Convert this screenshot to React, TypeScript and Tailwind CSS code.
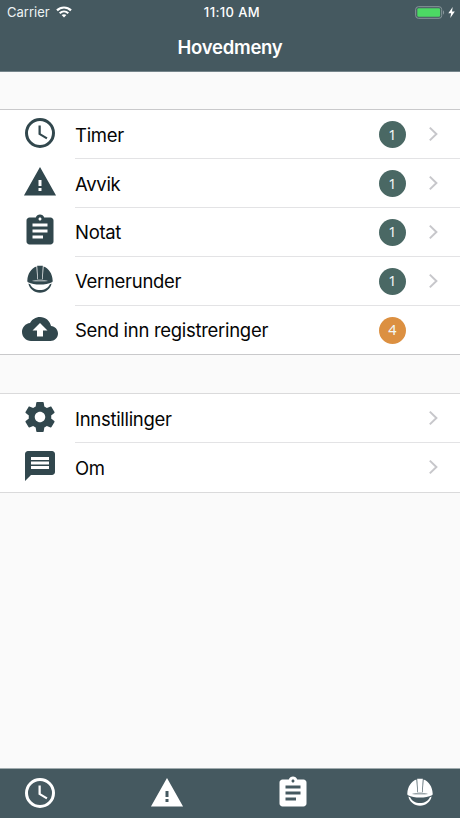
import React from 'react';

type IconProps = { className?: string };

const ClockIcon = ({ className = '' }: IconProps) => (
  <svg viewBox="0 0 24 24" className={`h-9 w-9 shrink-0 ${className}`} fill="currentColor">
    <path d="M12 2a10 10 0 1 0 0 20 10 10 0 0 0 0-20zm0 18a8 8 0 1 1 0-16 8 8 0 0 1 0 16z" />
    <path d="M12.500 7H11v6l5.250 3.150.75-1.230-4.500-2.670z" />
  </svg>
);

const WarningIcon = ({ className = '' }: IconProps) => (
  <svg viewBox="0 0 24 24" className={`h-9 w-9 shrink-0 ${className}`} fill="currentColor">
    <path d="M1.300 21h21.400L12 2 1.300 21zm11.700-3h-2v-2h2v2zm0-3.400h-2v-4h2v4z" />
  </svg>
);

const NoteIcon = ({ className = '' }: IconProps) => (
  <svg viewBox="0 0 24 24" className={`h-9 w-9 shrink-0 ${className}`} fill="currentColor">
    <path d="M19 3h-4.180C14.400 1.840 13.300 1 12 1c-1.300 0-2.400.84-2.820 2H5c-1.100 0-2 .9-2 2v14c0 1.100.9 2 2 2h14c1.100 0 2-.9 2-2V5c0-1.100-.9-2-2-2zm-7 0c.55 0 1 .45 1 1s-.45 1-1 1-1-.45-1-1 .45-1 1-1zm2 14H7v-2h7v2zm3-4H7v-2h10v2zm0-4H7V7h10v2z" />
  </svg>
);

const HelmetIcon = ({ className = '' }: IconProps) => (
  <svg viewBox="0 0 36 36" className={`h-9 w-9 shrink-0 ${className}`} fill="currentColor">
    <path d="M15.200 3.700h5.600l-.7 13.900h-4.200z" />
    <path
      fillRule="evenodd"
      d="M14.400 4.600l.9 12.600.6.300h4.200l.6-.3.900-12.600c5.200 1.900 8.800 7.200 9.100 14.100 0 .7-.2 1.300-.7 1.600-3.200 1.500-7.400 2.300-12 2.300s-8.800-.8-12-2.300c-.5-.3-.7-.9-.7-1.600.3-6.900 3.900-12.200 9.100-14.100zM10 19c4.800.7 11.200.7 16 0-4.500-1.300-11.500-1.300-16 0z"
    />
    <path d="M10 19c4.800.7 11.200.7 16 0-4.500-.7-11.500-.7-16 0z" />
    <path d="M6.400 21.600c1.100 5.300 5.800 9.200 11.600 9.200s10.500-3.900 11.600-9.200l-1.700.7c-1.700 3.700-5.400 5.800-9.900 5.800s-8.200-2.100-9.900-5.800z" />
  </svg>
);

const CloudIcon = ({ className = '' }: IconProps) => (
  <svg viewBox="0 0 24 24" className={`h-9 w-9 shrink-0 ${className}`} fill="currentColor">
    <path d="M19.350 10.040C18.670 6.590 15.640 4 12 4 9.110 4 6.600 5.640 5.350 8.040 2.340 8.360 0 10.910 0 14c0 3.310 2.690 6 6 6h13c2.760 0 5-2.240 5-5 0-2.640-2.050-4.780-4.650-4.960zM14 13v4h-4v-4H7l5-5 5 5h-3z" />
  </svg>
);

const GearIcon = ({ className = '' }: IconProps) => (
  <svg viewBox="0 0 24 24" className={`h-9 w-9 shrink-0 ${className}`} fill="currentColor">
    <path d="M19.430 12.980c.04-.32.07-.64.07-.98s-.03-.66-.07-.98l2.110-1.650c.19-.15.24-.42.12-.64l-2-3.460c-.12-.22-.39-.3-.61-.22l-2.490 1c-.52-.4-1.080-.73-1.690-.98l-.38-2.650C14.460 2.180 14.250 2 14 2h-4c-.25 0-.46.18-.49.42l-.38 2.650c-.61.25-1.170.59-1.690.98l-2.490-1c-.23-.09-.49 0-.61.22l-2 3.460c-.13.22-.07.49.12.64l2.110 1.650c-.04.32-.07.65-.07.98s.03.66.07.98l-2.110 1.650c-.19.15-.24.42-.12.64l2 3.460c.12.22.39.3.61.22l2.490-1c.52.4 1.080.73 1.690.98l.38 2.650c.03.24.24.42.49.42h4c.25 0 .46-.18.49-.42l.38-2.650c.61-.25 1.170-.59 1.690-.98l2.490 1c.23.09.49 0 .61-.22l2-3.460c.12-.22.07-.49-.12-.64l-2.110-1.650zM12 15.500c-1.930 0-3.500-1.570-3.500-3.500s1.570-3.500 3.500-3.500 3.500 1.570 3.500 3.500-1.570 3.500-3.500 3.500z" />
  </svg>
);

const MessageIcon = ({ className = '' }: IconProps) => (
  <svg viewBox="0 0 24 24" className={`h-9 w-9 shrink-0 ${className}`} fill="currentColor">
    <path d="M20 2H4c-1.100 0-1.990.9-1.990 2L2 22l4-4h14c1.100 0 2-.9 2-2V4c0-1.100-.9-2-2-2zm-2 12H6v-2h12v2zm0-3H6V9h12v2zm0-3H6V6h12v2z" />
  </svg>
);

const Chevron = () => (
  <svg viewBox="0 0 10 16" className="h-4 w-2.5" fill="none" stroke="#c7c7cb" strokeWidth="2">
    <path d="M1.800 1.600L8.400 8l-6.600 6.400" />
  </svg>
);

type RowProps = {
  icon: React.ReactNode;
  label: string;
  count?: number;
  alert?: boolean;
  arrow?: boolean;
  last?: boolean;
};

const Row = ({ icon, label, count, alert = false, arrow = true, last = false }: RowProps) => (
  <li className="flex h-[48.900px] items-stretch pl-[22px]">
    <span className="flex w-[53px] shrink-0 items-center pb-[2px] text-[#31474d]">{icon}</span>
    <div className={`flex flex-1 items-center pr-[21px] ${last ? 'pb-px' : 'border-b border-[#e3e3e5]'}`}>
      <span className="flex-1 pt-[1.500px] text-[18.500px] leading-6 tracking-[-0.3px] text-[#050505]">{label}</span>
      {count !== undefined && (
        <span
          className={`mr-[21px] mt-px flex h-[27px] w-[27px] items-center justify-center rounded-full pb-px font-['Noto_Sans',sans-serif] text-[14.500px] leading-none text-[#f2f8f7] ${alert ? 'bg-[#dc9041]' : 'bg-[#4a6864]'}`}
        >
          {count}
        </span>
      )}
      <span className="flex w-[12px] justify-center">{arrow && <Chevron />}</span>
    </div>
  </li>
);

export default function App() {
  return (
    <main className="flex h-[818px] w-[460px] flex-col overflow-hidden bg-[#fafafa] font-['Inter',sans-serif]">
      <header className="h-[71.500px] shrink-0 border-b border-[#75858b] bg-[#455960] text-white">
        <div className="grid h-6 grid-cols-3 items-center pl-[7px] pr-[5px] text-[13px] leading-6">
          <div className="flex items-center gap-[6px]">
            <span className="text-[#edf3f4]">Carrier</span>
            <svg viewBox="0 0 16 12" className="h-[12px] w-4" fill="none" stroke="white" strokeWidth="2.200">
              <path d="M1 4.400c4-3.900 10-3.900 14 0" />
              <path d="M3.700 7.200c2.500-2.300 6.100-2.300 8.600 0" />
              <path d="M8 11.500L5.600 9.100c1.300-1.200 3.500-1.200 4.800 0z" fill="white" stroke="none" />
            </svg>
          </div>
          <span className="pl-0.5 text-center font-medium tracking-[0.4px]">11:10 AM</span>
          <div className="flex items-center justify-end gap-[3px]">
            <svg viewBox="0 0 30 13" className="h-[13px] w-[30px]">
              <rect x=".7" y=".7" width="26" height="11.600" rx="2.700" fill="none" stroke="#88979b" />
              <rect x="2.300" y="2.300" width="22.800" height="8.400" rx="1.300" fill="#4cd964" />
              <path d="M28 4.300c1.500.8 1.500 3.600 0 4.400z" fill="#88979b" />
            </svg>
            <svg viewBox="0 0 7 11" className="h-[11px] w-[7px]" fill="white">
              <path d="M4.700 0L.3 6.200h2.800L2.300 11l4.500-6.500H4z" />
            </svg>
          </div>
        </div>
        <h1 className="pt-[10px] text-center text-[18.500px] font-semibold leading-[26px] tracking-[-0.25px]">Hovedmeny</h1>
      </header>

      <ul className="mt-[37.500px] shrink-0 border-y border-[#c9c9cb] bg-white">
        <Row icon={<ClockIcon />} label="Timer" count={1} />
        <Row icon={<WarningIcon />} label="Avvik" count={1} />
        <Row icon={<NoteIcon />} label="Notat" count={1} />
        <Row icon={<HelmetIcon />} label="Vernerunder" count={1} />
        <Row icon={<CloudIcon />} label="Send inn registreringer" count={4} alert arrow={false} last />
      </ul>

      <ul className="mt-[37.500px] shrink-0 border-y border-[#dadadb] bg-white">
        <Row icon={<GearIcon />} label="Innstillinger" />
        <Row icon={<MessageIcon />} label="Om" last />
      </ul>

      <nav className="mt-auto flex h-[50px] shrink-0 items-center justify-between border-t border-[#a0abae] bg-[#455960] px-[22px] pb-px text-white">
        <ClockIcon />
        <WarningIcon />
        <NoteIcon />
        <HelmetIcon />
      </nav>
    </main>
  );
}
